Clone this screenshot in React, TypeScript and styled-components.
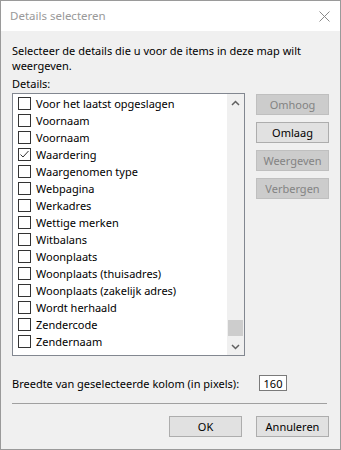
import React from 'react';
import styled, { createGlobalStyle } from 'styled-components';

const GlobalStyle = createGlobalStyle`
  html, body {
    margin: 0;
    padding: 0;
    background: #ffffff;
  }
  body {
    font-family: "Noto Sans", "Open Sans", "Liberation Sans", sans-serif;
    font-size: 11px;
    color: #000000;
  }
`;

const Window = styled.div`
  width: 341px;
  height: 450px;
  box-sizing: border-box;
  border: 1px solid #9a9a9a;
  background: #f0f0f0;
  display: flex;
  flex-direction: column;
`;

const TitleBar = styled.div`
  height: 30px;
  flex-shrink: 0;
  background: #ffffff;
  display: flex;
  align-items: center;
  justify-content: space-between;
  padding: 0 10px 0 9px;
`;

const Title = styled.span`
  color: #999999;
  font-size: 11.5px;
  padding-bottom: 1px;
`;

const CloseButton = styled.div`
  width: 12px;
  height: 12px;
  display: flex;
  align-items: center;
  justify-content: center;
`;

const Body = styled.div`
  flex: 1;
  display: flex;
  flex-direction: column;
  padding: 12px 11px 0 11px;
`;

const Intro = styled.p`
  margin: 0;
  width: 300px;
  line-height: 15px;
`;

const Label = styled.div`
  margin-top: 3px;
  line-height: 15px;
`;

const ContentRow = styled.div`
  display: flex;
  gap: 11px;
  margin-top: 2px;
`;

const ListBox = styled.div`
  width: 233px;
  height: 263px;
  box-sizing: border-box;
  border: 1px solid #828790;
  background: #ffffff;
  display: flex;
`;

const Items = styled.div`
  flex: 1;
  padding-top: 1px;
  display: flex;
  flex-direction: column;
`;

const Item = styled.div`
  height: 17px;
  display: flex;
  align-items: center;
  gap: 5px;
  padding-left: 5px;
  white-space: nowrap;
`;

const Box = styled.span`
  width: 13px;
  height: 13px;
  box-sizing: border-box;
  border: 1px solid #333333;
  background: #ffffff;
  flex-shrink: 0;
  display: flex;
  align-items: center;
  justify-content: center;
`;

const ScrollBar = styled.div`
  width: 17px;
  background: #f0f0f0;
  display: flex;
  flex-direction: column;
`;

const ArrowButton = styled.div`
  height: 17px;
  display: flex;
  align-items: center;
  justify-content: center;
  flex-shrink: 0;
`;

const Track = styled.div`
  flex: 1;
  display: flex;
  flex-direction: column;
  justify-content: flex-end;
  padding: 0 1px 2px 1px;
`;

const Thumb = styled.div`
  height: 16px;
  background: #cdcdcd;
`;

const ButtonColumn = styled.div`
  display: flex;
  flex-direction: column;
  gap: 7px;
  padding-top: 1px;
`;

const Button = styled.button<{ $disabled?: boolean }>`
  width: 73px;
  height: 21px;
  box-sizing: border-box;
  margin: 0;
  padding: 0;
  font: inherit;
  font-size: 11px;
  border: 1px solid ${(p) => (p.$disabled ? '#bfbfbf' : '#adadad')};
  background: ${(p) => (p.$disabled ? '#cccccc' : '#e1e1e1')};
  color: ${(p) => (p.$disabled ? '#838383' : '#000000')};
  display: flex;
  align-items: center;
  justify-content: center;
`;

const WidthRow = styled.div`
  display: flex;
  align-items: center;
  margin-top: 19px;
`;

const WidthLabel = styled.span`
  width: 247px;
  flex-shrink: 0;
  white-space: nowrap;
`;

const WidthInput = styled.div`
  width: 28px;
  height: 16px;
  box-sizing: border-box;
  border: 1px solid #7a7a7a;
  background: #ffffff;
  display: flex;
  align-items: center;
  justify-content: center;
  font-size: 11px;
`;

const Separator = styled.div`
  height: 1px;
  background: #a0a0a0;
  width: 315px;
  margin-top: 12px;
`;

const Footer = styled.div`
  display: flex;
  justify-content: flex-end;
  gap: 14px;
  margin-top: 12px;
`;

const items: { name: string; checked?: boolean }[] = [
  { name: 'Voor het laatst opgeslagen' },
  { name: 'Voornaam' },
  { name: 'Voornaam' },
  { name: 'Waardering', checked: true },
  { name: 'Waargenomen type' },
  { name: 'Webpagina' },
  { name: 'Werkadres' },
  { name: 'Wettige merken' },
  { name: 'Witbalans' },
  { name: 'Woonplaats' },
  { name: 'Woonplaats (thuisadres)' },
  { name: 'Woonplaats (zakelijk adres)' },
  { name: 'Wordt herhaald' },
  { name: 'Zendercode' },
  { name: 'Zendernaam' },
];

const Check = () => (
  <svg width="11" height="11" viewBox="0 0 11 11">
    <path d="M1.5 5.5 L4 8 L9.5 2" fill="none" stroke="#333" strokeWidth="1" />
  </svg>
);

const Chevron = ({ up }: { up?: boolean }) => (
  <svg width="9" height="6" viewBox="0 0 9 6">
    <path
      d={up ? 'M1 5 L4.5 1.5 L8 5' : 'M1 1 L4.5 4.5 L8 1'}
      fill="none"
      stroke="#606060"
      strokeWidth="1.5"
    />
  </svg>
);

const App: React.FC = () => {
  return (
    <>
      <GlobalStyle />
      <Window>
        <TitleBar>
          <Title>Details selecteren</Title>
          <CloseButton>
            <svg width="11" height="11" viewBox="0 0 11 11">
              <path d="M0.5 0.5 L10.5 10.5 M10.5 0.5 L0.5 10.5" stroke="#8a8a8a" strokeWidth="1" />
            </svg>
          </CloseButton>
        </TitleBar>
        <Body>
          <Intro>Selecteer de details die u voor de items in deze map wilt weergeven.</Intro>
          <Label>Details:</Label>
          <ContentRow>
            <ListBox>
              <Items>
                {items.map((it, i) => (
                  <Item key={i}>
                    <Box>{it.checked && <Check />}</Box>
                    <span>{it.name}</span>
                  </Item>
                ))}
              </Items>
              <ScrollBar>
                <ArrowButton>
                  <Chevron up />
                </ArrowButton>
                <Track>
                  <Thumb />
                </Track>
                <ArrowButton>
                  <Chevron />
                </ArrowButton>
              </ScrollBar>
            </ListBox>
            <ButtonColumn>
              <Button $disabled>Omhoog</Button>
              <Button>Omlaag</Button>
              <Button $disabled>Weergeven</Button>
              <Button $disabled>Verbergen</Button>
            </ButtonColumn>
          </ContentRow>
          <WidthRow>
            <WidthLabel>Breedte van geselecteerde kolom (in pixels):</WidthLabel>
            <WidthInput>160</WidthInput>
          </WidthRow>
          <Separator />
          <Footer>
            <Button>OK</Button>
            <Button>Annuleren</Button>
          </Footer>
        </Body>
      </Window>
    </>
  );
};

export default App;
